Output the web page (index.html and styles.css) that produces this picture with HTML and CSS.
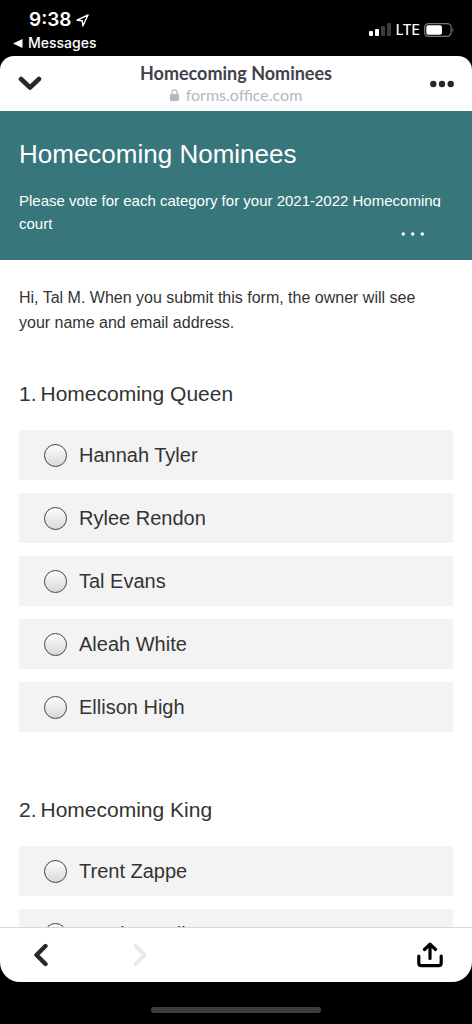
FILE: index.html
```html
<!DOCTYPE html>
<html lang="en">
<head>
    <meta charset="UTF-8">
    <meta name="viewport" content="width=device-width, initial-scale=1.0">
    <title>Homecoming Nominees</title>
    <link rel="stylesheet" href="styles.css">
</head>
<body>
    <div class="status-bar">
        <div class="status-left">
            <div class="clock">
                <span>9:38</span>
                <svg width="13" height="13" viewBox="0 0 13 13" fill="none" stroke="#fff" stroke-width="1.4" stroke-linejoin="round"><path d="M12 1 L1 6.2 L6.3 6.7 L6.8 12 Z"/></svg>
            </div>
            <a class="back-link" href="#">
                <svg width="10" height="9" viewBox="0 0 10 9" fill="#fff"><path d="M0 4.5 L9.5 0 V9 Z"/></svg>
                <span>Messages</span>
            </a>
        </div>
        <div class="status-right">
            <svg width="23" height="15" viewBox="0 0 23 15">
                <rect x="0" y="9" width="4" height="5" rx="1" fill="#fff"/>
                <rect x="6" y="7" width="4" height="7" rx="1" fill="#fff"/>
                <rect x="12" y="4" width="4" height="10" rx="1" fill="#3c3c3c"/>
                <rect x="18" y="1" width="4" height="13" rx="1" fill="#3c3c3c"/>
            </svg>
            <span>LTE</span>
            <svg width="31" height="14" viewBox="0 0 31 14">
                <rect x="0.6" y="0.6" width="26.5" height="12.8" rx="4" fill="none" stroke="#777" stroke-width="1.2"/>
                <rect x="2.3" y="2.2" width="15.7" height="9.6" rx="2" fill="#fff"/>
                <path d="M28.6 4.8 Q30.6 7 28.6 9.2 Z" fill="#777"/>
            </svg>
        </div>
    </div>

    <div class="browser">
        <div class="browser-header">
            <button class="icon-button" aria-label="Close">
                <svg width="24" height="16" viewBox="0 0 24 16" fill="none" stroke="#26282c" stroke-width="4.6" stroke-linecap="round" stroke-linejoin="round"><path d="M3 3 L12 11.5 L21 3"/></svg>
            </button>
            <div class="page-info">
                <div class="page-title">Homecoming Nominees</div>
                <div class="page-url">
                    <svg width="9" height="12" viewBox="0 0 9 12"><rect x="0" y="5" width="9" height="7" rx="1" fill="#b4b7be"/><path d="M2 5.5 V3.3 a2.5 2.5 0 0 1 5 0 V5.5" fill="none" stroke="#b4b7be" stroke-width="1.3"/></svg>
                    <span>forms.office.com</span>
                </div>
            </div>
            <button class="icon-button" aria-label="More">
                <svg width="24" height="8" viewBox="0 0 24 8" fill="#26282c"><circle cx="3.3" cy="4" r="3.2"/><circle cx="12" cy="4" r="3.2"/><circle cx="20.7" cy="4" r="3.2"/></svg>
            </button>
        </div>

        <div class="page">
            <div class="form-header">
                <h1>Homecoming Nominees</h1>
                <p>Please vote for each category for your 2021-2022 Homecoming court</p>
                <button class="form-menu" aria-label="Form options">
                    <svg width="24" height="4" viewBox="0 0 24 4" fill="#fff"><circle cx="2.3" cy="2" r="1.7"/><circle cx="11.7" cy="2" r="1.7"/><circle cx="21.3" cy="2" r="1.7"/></svg>
                </button>
            </div>
            <form class="form-body">
                <p class="notice">Hi, Tal M. When you submit this form, the owner will see your name and email address.</p>

                <fieldset class="question">
                    <legend><span class="number">1.</span>Homecoming Queen</legend>
                    <label class="choice"><input type="radio" name="queen">Hannah Tyler</label>
                    <label class="choice"><input type="radio" name="queen">Rylee Rendon</label>
                    <label class="choice"><input type="radio" name="queen">Tal Evans</label>
                    <label class="choice"><input type="radio" name="queen">Aleah White</label>
                    <label class="choice"><input type="radio" name="queen">Ellison High</label>
                </fieldset>

                <fieldset class="question">
                    <legend><span class="number">2.</span>Homecoming King</legend>
                    <label class="choice"><input type="radio" name="king">Trent Zappe</label>
                    <label class="choice"><input type="radio" name="king">Kayden Kelly</label>
                </fieldset>
            </form>
        </div>

        <div class="toolbar">
            <button class="icon-button" aria-label="Back">
                <svg width="16" height="24" viewBox="0 0 16 24" fill="none" stroke="#26282c" stroke-width="4.4" stroke-linecap="round" stroke-linejoin="round"><path d="M12.5 3 L3.5 12 L12.5 21"/></svg>
            </button>
            <button class="icon-button forward" aria-label="Forward" disabled>
                <svg width="16" height="24" viewBox="0 0 16 24" fill="none" stroke="#e9e9e9" stroke-width="4" stroke-linecap="round" stroke-linejoin="round"><path d="M3.5 3 L12.5 12 L3.5 21"/></svg>
            </button>
            <button class="icon-button share" aria-label="Share">
                <svg width="26" height="26" viewBox="0 0 26 26" fill="none" stroke="#000" stroke-width="3.2" stroke-linecap="round" stroke-linejoin="round"><path d="M1.8 14 V21 Q1.8 23.6 4.4 23.6 H21.6 Q24.2 23.6 24.2 21 V14"/><path d="M13 16.5 V2.5 M7.5 7.5 L13 2.2 L18.5 7.5"/></svg>
            </button>
        </div>
    </div>

    <div class="home-area">
        <div class="home-indicator"></div>
    </div>
</body>
</html>
```
FILE: styles.css
```css
* {
    box-sizing: border-box;
}
body {
    margin: 0;
    height: 100vh;
    display: flex;
    flex-direction: column;
    background: #000;
    color: #333;
    font-family: "Liberation Sans", Arial, sans-serif;
}
button {
    padding: 0;
    border: none;
    background: none;
    cursor: pointer;
}
svg {
    display: block;
    flex: none;
}

/* phone status bar */
.status-bar {
    flex: none;
    height: 56px;
    padding: 8px 17px 0 13px;
    display: flex;
    justify-content: space-between;
    color: #fff;
    font-family: Inter, sans-serif;
}
.clock {
    display: flex;
    align-items: center;
    gap: 5px;
    padding-left: 16px;
    font-size: 19px;
    font-weight: 600;
    line-height: 24px;
}
.back-link {
    display: flex;
    align-items: center;
    gap: 5px;
    color: #fff;
    font-size: 14px;
    font-weight: 500;
    line-height: 22px;
    text-decoration: none;
}
.status-right {
    display: flex;
    align-items: center;
    gap: 4px;
    height: 43px;
    font-size: 14px;
    font-weight: 500;
}

.browser {
    flex: 1;
    min-height: 0;
    display: flex;
    flex-direction: column;
    overflow: hidden;
    background: #fff;
    border-radius: 14px 14px 20px 20px;
}
.browser-header {
    flex: none;
    height: 55px;
    padding: 0 18px;
    display: flex;
    align-items: center;
    justify-content: space-between;
}
.page-info {
    text-align: center;
    font-family: Lato, sans-serif;
}
.page-title {
    color: #3f424b;
    font-size: 18px;
    font-weight: 700;
    line-height: 22px;
}
.page-url {
    display: flex;
    align-items: center;
    justify-content: center;
    gap: 7px;
    color: #b4b7be;
    font-size: 16px;
    line-height: 22px;
}

/* form */
.page {
    flex: 1;
    min-height: 0;
    overflow: hidden;
}
.form-header {
    position: relative;
    padding: 27px 19px 25px;
    background: #37767b;
    color: #fff;
}
.form-header h1 {
    margin: 0 0 19px;
    font-size: 26px;
    font-weight: 400;
    line-height: 32px;
}
.form-header p {
    margin: 0;
    font-size: 15px;
    line-height: 23px;
}
.form-menu {
    position: absolute;
    right: 19px;
    bottom: 0;
    width: 64px;
    height: 53px;
    background: #37767b;
}
.form-menu svg {
    margin: 0 12px;
}
.form-body {
    padding: 25px 19px;
}
.notice {
    margin: 0 0 44px;
    padding-right: 20px;
    font-size: 16px;
    line-height: 25px;
}
.question {
    margin: 0 0 50px;
    padding: 0;
    border: none;
}
.question legend {
    padding: 0;
    margin-bottom: 21px;
    font-size: 21px;
    line-height: 30px;
}
.number {
    margin-right: 4px;
}
.choice {
    display: flex;
    align-items: center;
    gap: 12px;
    height: 50px;
    margin-bottom: 13px;
    padding-left: 25px;
    background: #f3f3f3;
    font-size: 20px;
}
.choice input {
    appearance: none;
    width: 23px;
    height: 23px;
    margin: 0;
    border: 1px solid #444;
    border-radius: 50%;
    background: linear-gradient(#fdfdfd, #d8d8d8);
}
.choice input:checked {
    background: #37767b;
}

.toolbar {
    flex: none;
    height: 55px;
    padding: 0 29px 0 33px;
    display: flex;
    align-items: center;
    border-top: 1px solid #d8d8d8;
}
.forward {
    margin-left: 83px;
}
.share {
    margin-left: auto;
}

.home-area {
    flex: none;
    height: 42px;
    padding-top: 25px;
}
.home-indicator {
    width: 36%;
    height: 6px;
    margin: 0 auto;
    border-radius: 3px;
    background: #3c3c3c;
}
```
